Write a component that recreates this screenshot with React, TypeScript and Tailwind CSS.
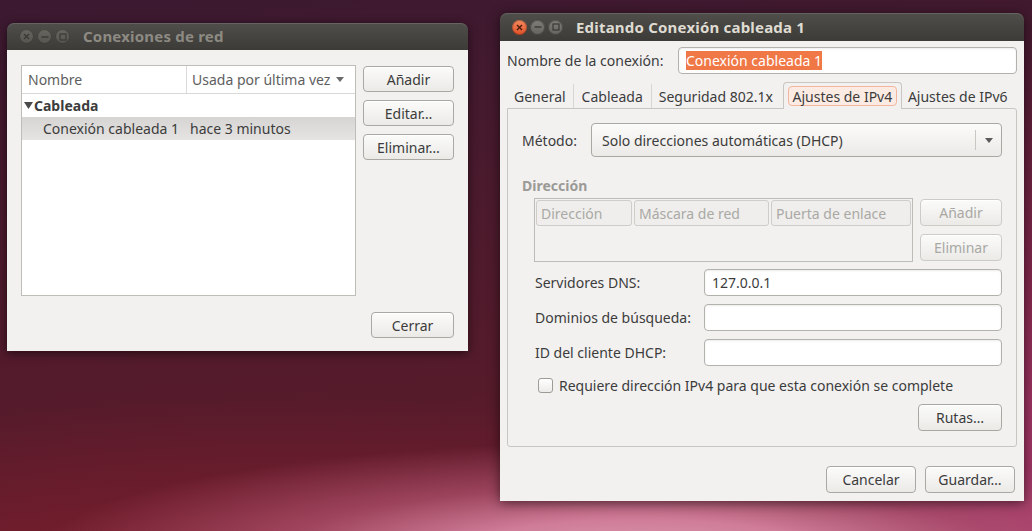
import React from "react";

const FONT = "font-['Noto_Sans','Open_Sans',sans-serif]";

function Btn({
  children,
  className = "",
  disabled = false,
}: {
  children: React.ReactNode;
  className?: string;
  disabled?: boolean;
}) {
  return (
    <div
      className={`flex items-center justify-center rounded-[4px] border bg-linear-to-b from-[#fbfbfa] to-[#ebeae7] shadow-[inset_0_1px_0_rgba(255,255,255,0.9)] ${
        disabled ? "border-[#cdcbc7] text-[#a9a8a4]" : "border-[#aaa8a3] text-[#3c3c3c]"
      } ${className}`}
    >
      {children}
    </div>
  );
}

function WinButtons({ active }: { active: boolean }) {
  const sym = active ? "#3b3a36" : "#3a3935";
  return (
    <div className="flex items-center gap-[3px]">
      <div
        className={`w-[15px] h-[15px] rounded-full flex items-center justify-center ${
          active
            ? "bg-linear-to-b from-[#f78a5e] to-[#de4f26] shadow-[inset_0_0_0_1px_rgba(0,0,0,0.25)]"
            : "bg-linear-to-b from-[#67665f] to-[#55544f] shadow-[inset_0_0_0_1px_rgba(0,0,0,0.3)]"
        }`}
      >
        <svg width="7" height="7" viewBox="0 0 7 7">
          <path d="M1 1 L6 6 M6 1 L1 6" stroke={active ? "#4a1c0c" : sym} strokeWidth="1.4" />
        </svg>
      </div>
      <div
        className={`w-[15px] h-[15px] rounded-full flex items-center justify-center ${
          active
            ? "bg-linear-to-b from-[#7f7e78] to-[#64635e] shadow-[inset_0_0_0_1px_rgba(0,0,0,0.3)]"
            : "bg-linear-to-b from-[#67665f] to-[#55544f] shadow-[inset_0_0_0_1px_rgba(0,0,0,0.3)]"
        }`}
      >
        <svg width="8" height="8" viewBox="0 0 8 8">
          <path d="M0.5 4 L7.5 4" stroke={sym} strokeWidth="1.4" />
        </svg>
      </div>
      <div
        className={`w-[15px] h-[15px] rounded-full flex items-center justify-center ${
          active
            ? "bg-linear-to-b from-[#7f7e78] to-[#64635e] shadow-[inset_0_0_0_1px_rgba(0,0,0,0.3)]"
            : "bg-linear-to-b from-[#67665f] to-[#55544f] shadow-[inset_0_0_0_1px_rgba(0,0,0,0.3)]"
        }`}
      >
        <svg width="8" height="8" viewBox="0 0 8 8">
          <rect x="1" y="1" width="6" height="6" fill="none" stroke={sym} strokeWidth="1.2" />
        </svg>
      </div>
    </div>
  );
}

function TitleBar({ title, active, h }: { title: string; active: boolean; h: string }) {
  return (
    <div
      className={`${h} shrink-0 rounded-t-[7px] bg-linear-to-b from-[#4f4e4a] to-[#3c3b37] flex items-center pl-[12px] shadow-[inset_0_1px_0_rgba(255,255,255,0.12)]`}
    >
      <WinButtons active={active} />
      <div
        className={`ml-[13px] text-[15px] font-bold tracking-[0.2px] ${
          active ? "text-[#dfdbd2]" : "text-[#8d8a83]"
        }`}
      >
        {title}
      </div>
    </div>
  );
}

function SmallArrow({ color = "#555" }: { color?: string }) {
  return (
    <svg width="8" height="5" viewBox="0 0 8 5">
      <path d="M0 0 L8 0 L4 5 Z" fill={color} />
    </svg>
  );
}

function Input({ children }: { children?: React.ReactNode }) {
  return (
    <div className="flex-1 h-[27px] rounded-[4px] border border-[#b3b1ac] bg-white shadow-[inset_0_1px_2px_rgba(0,0,0,0.08)] flex items-center pl-[7px] text-[#3c3c3c]">
      {children}
    </div>
  );
}

export default function App() {
  return (
    <div
      className={`${FONT} relative w-[1032px] h-[531px] overflow-hidden text-[14px] text-[#3c3c3c] bg-[radial-gradient(ellipse_600px_110px_at_62%_104%,#dc9ab0_0%,#cf7c98_30%,rgba(196,100,132,0.55)_60%,rgba(190,90,120,0)_100%),radial-gradient(ellipse_260px_420px_at_102%_85%,#a6386a_0%,rgba(150,44,90,0.7)_40%,rgba(120,30,60,0)_100%),radial-gradient(ellipse_700px_200px_at_25%_112%,#7c1e2c_0%,rgba(110,28,40,0)_100%),linear-gradient(175deg,#3b1930_0%,#4a1a2d_35%,#561b2b_70%,#661c2d_100%)]`}
    >
      {/* Left window: Conexiones de red */}
      <div className="absolute left-[7px] top-[23px] w-[461px] h-[328px] flex flex-col rounded-t-[7px] shadow-[0_2px_10px_rgba(0,0,0,0.55)]">
        <TitleBar title="Conexiones de red" active={false} h="h-[27px]" />
        <div className="flex-1 bg-[#f2f1f0] px-[14px] pt-[15px] flex flex-col">
          <div className="flex gap-[7px]">
            <div className="w-[335px] h-[231px] bg-white border border-[#bfbdb8] flex flex-col">
              <div className="h-[28px] flex border-b border-[#d9d8d5] text-[#5e5e5e]">
                <div className="w-[165px] pl-[6px] flex items-center border-r border-[#dcdbd8]">
                  Nombre
                </div>
                <div className="flex-1 pl-[5px] pr-[11px] flex items-center justify-between">
                  <span>Usada por última vez</span>
                  <SmallArrow color="#6a6a6a" />
                </div>
              </div>
              <div className="h-[23px] flex items-center">
                <div className="w-[12px] flex justify-center">
                  <svg width="9" height="7" viewBox="0 0 9 7">
                    <path d="M0 0 L9 0 L4.5 7 Z" fill="#4a4a4a" />
                  </svg>
                </div>
                <span className="font-bold text-[#3c3c3c]">Cableada</span>
              </div>
              <div className="h-[23px] flex items-center bg-linear-to-b from-[#d6d5d3] to-[#e5e4e2]">
                <div className="w-[168px] pl-[21px] whitespace-nowrap">Conexión cableada 1</div>
                <div className="whitespace-nowrap">hace 3 minutos</div>
              </div>
            </div>
            <div className="w-[91px] flex flex-col gap-[8px] pt-[1px]">
              <Btn className="h-[26px]">Añadir</Btn>
              <Btn className="h-[26px]">Editar…</Btn>
              <Btn className="h-[26px]">Eliminar…</Btn>
            </div>
          </div>
          <div className="flex justify-end mt-[16px]">
            <Btn className="w-[83px] h-[26px]">Cerrar</Btn>
          </div>
        </div>
      </div>

      {/* Right window: Editando */}
      <div className="absolute left-[500px] top-[13px] w-[524px] h-[488px] flex flex-col rounded-t-[7px] shadow-[0_2px_12px_rgba(0,0,0,0.55)]">
        <TitleBar title="Editando Conexión cableada 1" active={true} h="h-[28px]" />
        <div className="flex-1 bg-[#f2f1f0] px-[7px] pt-[6px] flex flex-col">
          {/* name row */}
          <div className="flex items-center h-[27px]">
            <div className="w-[171px] whitespace-nowrap">Nombre de la conexión:</div>
            <Input>
              <span className="bg-[#f07746] text-white leading-[19px]">Conexión cableada 1</span>
            </Input>
          </div>

          {/* tabs */}
          <div className="mt-[7px] flex items-end h-[27px]">
            <div className="h-[24px] flex items-center px-[7px] border-r border-[#d8d6d2]">General</div>
            <div className="h-[24px] flex items-center px-[8px] border-r border-[#d8d6d2]">Cableada</div>
            <div className="h-[24px] flex items-center px-[7px]">Seguridad 802.1x</div>
            <div className="relative z-10 -mb-px ml-[3px] h-[27px] w-[119px] rounded-t-[4px] border border-b-0 border-[#c8c6c1] bg-[#f2f1f0] flex items-center justify-center">
              <div className="h-[20px] px-[4px] rounded-[4px] border border-[#f3b59e] bg-[#fcebe3] flex items-center">
                Ajustes de IPv4
              </div>
            </div>
            <div className="h-[24px] flex items-center pl-[6px] whitespace-nowrap">Ajustes de IPv6</div>
          </div>

          {/* panel */}
          <div className="h-[339px] border border-[#c8c6c1] rounded-b-[3px] rounded-tr-[3px] pl-[14px] pr-[14px] pt-[14px] flex flex-col">
            <div className="flex items-center h-[34px]">
              <div className="w-[69px]">Método:</div>
              <div className="flex-1 h-[34px] rounded-[4px] border border-[#aaa8a3] bg-linear-to-b from-[#fbfbfa] to-[#eceae7] flex items-center pl-[10px]">
                <span className="flex-1">Solo direcciones automáticas (DHCP)</span>
                <div className="w-[26px] h-[20px] border-l border-[#c9c7c2] flex items-center justify-center">
                  <SmallArrow color="#5a5a5a" />
                </div>
              </div>
            </div>

            <div className="mt-[19px] h-[18px] flex items-center font-bold text-[#9b9a96]">Dirección</div>

            <div className="mt-[4px] pl-[12px] flex">
              <div className="w-[379px] h-[64px] border border-[#bebcb7] p-[1px] flex flex-col">
                <div className="flex gap-[2px] h-[26px] text-[#aaa9a5]">
                  <div className="w-[96px] rounded-[3px] border border-[#cfcdc9] bg-[#efeeec] flex items-center pl-[4px]">
                    Dirección
                  </div>
                  <div className="w-[135px] rounded-[3px] border border-[#cfcdc9] bg-[#efeeec] flex items-center pl-[4px]">
                    Máscara de red
                  </div>
                  <div className="flex-1 rounded-[3px] border border-[#cfcdc9] bg-[#efeeec] flex items-center pl-[4px]">
                    Puerta de enlace
                  </div>
                </div>
              </div>
              <div className="ml-[7px] w-[82px] flex flex-col gap-[8px] pt-[1px]">
                <Btn disabled className="h-[27px]">Añadir</Btn>
                <Btn disabled className="h-[27px]">Eliminar</Btn>
              </div>
            </div>

            <div className="mt-[7px] pl-[13px] flex flex-col gap-[8px]">
              <div className="flex items-center h-[27px]">
                <div className="w-[169px]">Servidores DNS:</div>
                <Input>127.0.0.1</Input>
              </div>
              <div className="flex items-center h-[27px]">
                <div className="w-[169px]">Dominios de búsqueda:</div>
                <Input />
              </div>
              <div className="flex items-center h-[27px]">
                <div className="w-[169px]">ID del cliente DHCP:</div>
                <Input />
              </div>
            </div>

            <div className="mt-[11px] pl-[16px] flex items-center h-[16px]">
              <div className="w-[15px] h-[15px] rounded-[3px] border border-[#9d9b96] bg-linear-to-b from-white to-[#ecebe9]" />
              <span className="ml-[6px] whitespace-nowrap">Requiere dirección IPv4 para que esta conexión se complete</span>
            </div>

            <div className="mt-[11px] flex justify-end">
              <Btn className="w-[84px] h-[27px]">Rutas…</Btn>
            </div>
          </div>

          {/* bottom buttons */}
          <div className="mt-[19px] flex justify-end gap-[9px] pr-[2px]">
            <Btn className="w-[90px] h-[27px]">Cancelar</Btn>
            <Btn className="w-[90px] h-[27px]">Guardar…</Btn>
          </div>
        </div>
      </div>
    </div>
  );
}
